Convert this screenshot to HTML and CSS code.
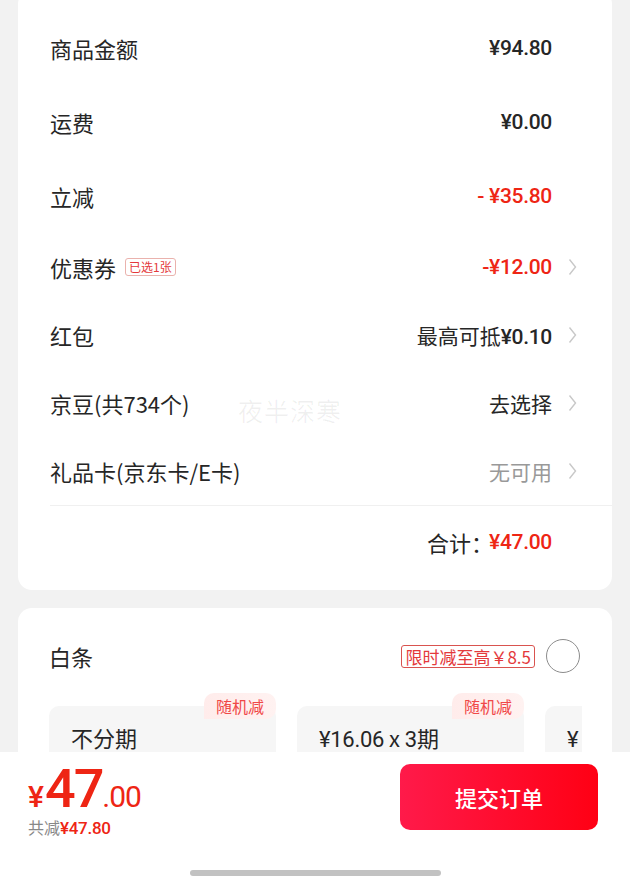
FILE: index.html
```html
<!DOCTYPE html>
<html lang="zh-CN">

<head>
    <meta charset="UTF-8">
    <meta name="viewport" content="width=device-width, initial-scale=1.0">
    <title>确认订单</title>
    <link rel="stylesheet" href="styles.css">
</head>

<body>
    <main class="page">
        <section class="card fee-card">
            <div class="fee-list">
                <div class="row row-tall">
                    <span class="label">商品金额</span>
                    <span class="value num">¥94.80</span>
                    <span class="arrow"></span>
                </div>
                <div class="row row-tall">
                    <span class="label">运费</span>
                    <span class="value num">¥0.00</span>
                    <span class="arrow"></span>
                </div>
                <div class="row row-tall">
                    <span class="label">立减</span>
                    <span class="value num red">- ¥35.80</span>
                    <span class="arrow"></span>
                </div>
                <div class="row">
                    <span class="label">优惠券 <em class="tag">已选1张</em></span>
                    <span class="value num red">-¥12.00</span>
                    <span class="arrow"><svg width="9" height="18" viewBox="0 0 9 18"><path d="M1.5 1.5 L7.5 9 L1.5 16.5" fill="none" stroke="#c8c8c8" stroke-width="1.4"/></svg></span>
                </div>
                <div class="row">
                    <span class="label">红包</span>
                    <span class="value">最高可抵<b class="num">¥0.10</b></span>
                    <span class="arrow"><svg width="9" height="18" viewBox="0 0 9 18"><path d="M1.5 1.5 L7.5 9 L1.5 16.5" fill="none" stroke="#c8c8c8" stroke-width="1.4"/></svg></span>
                </div>
                <div class="row">
                    <span class="label">京豆(共734个)</span>
                    <span class="value">去选择</span>
                    <span class="arrow"><svg width="9" height="18" viewBox="0 0 9 18"><path d="M1.5 1.5 L7.5 9 L1.5 16.5" fill="none" stroke="#c8c8c8" stroke-width="1.4"/></svg></span>
                </div>
                <div class="row">
                    <span class="label">礼品卡(京东卡/E卡)</span>
                    <span class="value muted">无可用</span>
                    <span class="arrow"><svg width="9" height="18" viewBox="0 0 9 18"><path d="M1.5 1.5 L7.5 9 L1.5 16.5" fill="none" stroke="#c8c8c8" stroke-width="1.4"/></svg></span>
                </div>
            </div>
            <div class="total">
                <span class="label">合计：</span>
                <span class="value num red">¥47.00</span>
                <span class="arrow"></span>
            </div>
        </section>

        <section class="card baitiao">
            <div class="bt-head">
                <span class="label">白条</span>
                <span class="bt-promo">限时减至高￥8.5</span>
                <span class="radio"></span>
            </div>
            <div class="plans">
                <div class="plan">
                    <span class="plan-badge">随机减</span>
                    <div class="plan-body">不分期</div>
                </div>
                <div class="plan">
                    <span class="plan-badge">随机减</span>
                    <div class="plan-body"><span class="num">¥16.06</span> x <span class="num">3</span>期</div>
                </div>
                <div class="plan">
                    <div class="plan-body"><span class="num">¥</span></div>
                </div>
            </div>
        </section>
    </main>

    <div class="watermark">夜半深寒</div>

    <footer class="bottom-bar">
        <div class="bar-main">
            <div class="pay">
                <div class="pay-total num"><span class="yen">¥</span><span class="int">47</span><span class="dec">.00</span></div>
                <div class="pay-save">共减<b class="num">¥47.80</b></div>
            </div>
            <button class="submit">提交订单</button>
        </div>
        <div class="home-bar"></div>
    </footer>
</body>

</html>
```

FILE: styles.css
```css
body {
    margin: 0;
    background: #f2f2f2;
    font-family: "Noto Sans CJK SC", "Noto Sans", sans-serif;
    color: #262626;
    height: 883px;
    overflow: hidden;
}

.num {
    font-family: Roboto, "Noto Sans CJK SC", sans-serif;
    font-weight: 500;
    letter-spacing: -0.3px;
}

.red {
    color: #ee2514;
}

.card {
    background: #fff;
    border-radius: 14px;
    margin: 0 18px;
}

/* 금액 카드 */
.fee-card {
    margin-top: -10px;
    padding: 21px 0 12px 32px;
}

.fee-list {
    border-bottom: 1px solid #f0f0f0;
}

.row,
.total {
    display: flex;
    align-items: center;
    padding-right: 32px;
    height: 68px;
}

.row-tall {
    height: 74px;
}

.total {
    height: 72px;
    justify-content: flex-end;
}

.label {
    font-size: 22px;
    flex: 1;
    display: flex;
    align-items: center;
}

.total .label {
    flex: none;
    margin-right: -4px;
}

.value {
    font-size: 21px;
}

.value b {
    font-weight: 500;
}

.muted {
    color: #999;
}

.arrow {
    width: 28px;
    display: flex;
    justify-content: flex-end;
    padding-right: 3px;
    box-sizing: border-box;
}

.tag {
    font-style: normal;
    font-size: 12px;
    color: #e4393c;
    border: 1px solid #eab2ad;
    border-radius: 3px;
    padding: 0 3px;
    line-height: 16px;
    margin-left: 9px;
}

/* 백조 카드 */
.baitiao {
    margin-top: 18px;
    padding: 17px 30px 0 31px;
    height: 200px;
}

.bt-head {
    display: flex;
    align-items: center;
    height: 62px;
    padding-right: 2px;
}

.bt-promo {
    font-size: 17px;
    color: #e4393c;
    border: 1px solid #d9534f;
    border-radius: 3px;
    padding: 0 3px;
    line-height: 21px;
    margin-right: 11px;
}

.radio {
    width: 32px;
    height: 32px;
    border: 1.5px solid #8c8c8c;
    border-radius: 50%;
}

.plans {
    display: flex;
    gap: 21px;
    overflow: hidden;
    margin-top: 6px;
}

.plan {
    position: relative;
    flex-shrink: 0;
    width: 227px;
    padding-top: 13px;
}

.plan-body {
    background: #f6f6f6;
    border-radius: 10px;
    height: 90px;
    padding: 15px 22px;
    box-sizing: border-box;
    font-size: 22px;
}

.plan-body .num {
    font-weight: 400;
}

.plan-badge {
    position: absolute;
    top: 0;
    right: 0;
    font-size: 16px;
    line-height: 26px;
    padding: 0 12px;
    color: #f04848;
    background: linear-gradient(90deg, #ffeceb, #fff2f1);
    border-radius: 10px 10px 10px 0;
}

.watermark {
    position: absolute;
    left: 238px;
    top: 392px;
    font-size: 25px;
    color: rgba(0, 0, 0, 0.06);
    letter-spacing: 1px;
}

/* 하단 바 */
.bottom-bar {
    position: fixed;
    left: 0;
    right: 0;
    bottom: 0;
    height: 131px;
    background: #fff;
    display: flex;
    flex-direction: column;
}

.bar-main {
    display: flex;
    justify-content: space-between;
    align-items: flex-start;
    padding: 12px 32px 0 28px;
}

.pay-total {
    color: #ee2514;
    line-height: 50px;
    font-weight: 500;
    letter-spacing: -1px;
}

.pay-total .yen {
    font-size: 30px;
    margin-right: 2px;
}

.pay-total .int {
    font-size: 54px;
    letter-spacing: -2px;
}

.pay-total .dec {
    font-size: 30px;
    font-weight: 400;
}

.pay-save {
    font-size: 16px;
    color: #888;
    line-height: 22px;
    margin-top: -11px;
}

.pay-save b {
    color: #ee2514;
    font-size: 17px;
}

.submit {
    width: 198px;
    height: 66px;
    border: 0;
    border-radius: 10px;
    background: linear-gradient(90deg, #ff1a4a, #ff0014);
    color: #fff;
    font-family: "Noto Sans CJK SC", sans-serif;
    font-size: 22px;
    font-weight: 500;
}

.home-bar {
    width: 251px;
    height: 6px;
    border-radius: 3px;
    background: #c2c2c2;
    margin: 31px auto 0;
}
```
